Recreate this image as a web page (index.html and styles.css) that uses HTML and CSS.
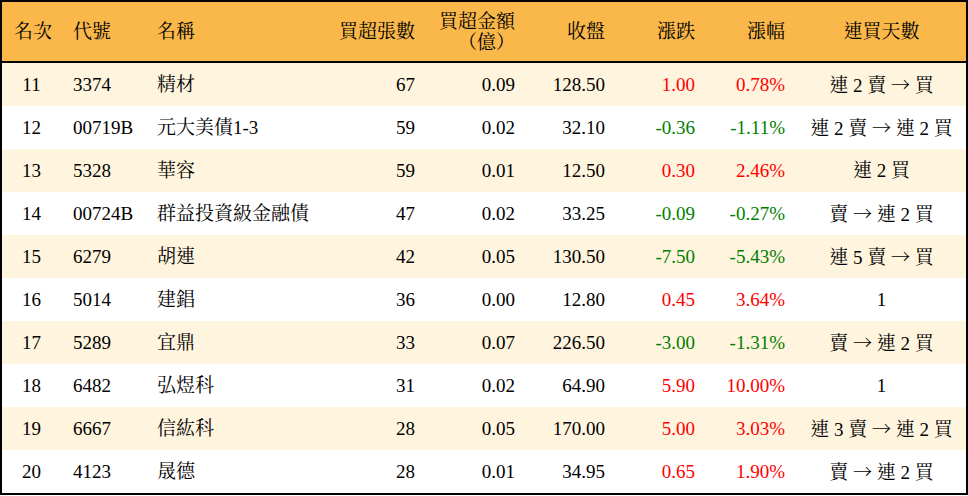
FILE: index.html
```html
<!DOCTYPE html>
<html lang="zh-Hant">
<head>
<meta charset="utf-8">
<title>買超排行</title>
<link rel="stylesheet" href="styles.css">
</head>
<body>
<table class="rank">
  <colgroup>
    <col class="c-rank"><col class="c-code"><col class="c-name"><col class="c-vol"><col class="c-amt"><col class="c-close"><col class="c-chg"><col class="c-pct"><col class="c-days">
  </colgroup>
  <thead>
    <tr>
      <th class="ctr">名次</th>
      <th class="lft">代號</th>
      <th class="lft">名稱</th>
      <th class="rgt">買超張數</th>
      <th class="rgt">買超金額<br>（億）</th>
      <th class="rgt">收盤</th>
      <th class="rgt">漲跌</th>
      <th class="rgt">漲幅</th>
      <th class="ctr">連買天數</th>
    </tr>
  </thead>
  <tbody>
    <tr class="odd"><td class="ctr">11</td><td class="lft">3374</td><td class="lft">精材</td><td class="rgt">67</td><td class="rgt">0.09</td><td class="rgt">128.50</td><td class="rgt up">1.00</td><td class="rgt up">0.78%</td><td class="ctr">連 2 賣 <span class="arr">→</span> 買</td></tr>
    <tr><td class="ctr">12</td><td class="lft">00719B</td><td class="lft">元大美債1-3</td><td class="rgt">59</td><td class="rgt">0.02</td><td class="rgt">32.10</td><td class="rgt down">-0.36</td><td class="rgt down">-1.11%</td><td class="ctr">連 2 賣 <span class="arr">→</span> 連 2 買</td></tr>
    <tr class="odd"><td class="ctr">13</td><td class="lft">5328</td><td class="lft">華容</td><td class="rgt">59</td><td class="rgt">0.01</td><td class="rgt">12.50</td><td class="rgt up">0.30</td><td class="rgt up">2.46%</td><td class="ctr">連 2 買</td></tr>
    <tr><td class="ctr">14</td><td class="lft">00724B</td><td class="lft">群益投資級金融債</td><td class="rgt">47</td><td class="rgt">0.02</td><td class="rgt">33.25</td><td class="rgt down">-0.09</td><td class="rgt down">-0.27%</td><td class="ctr">賣 <span class="arr">→</span> 連 2 買</td></tr>
    <tr class="odd"><td class="ctr">15</td><td class="lft">6279</td><td class="lft">胡連</td><td class="rgt">42</td><td class="rgt">0.05</td><td class="rgt">130.50</td><td class="rgt down">-7.50</td><td class="rgt down">-5.43%</td><td class="ctr">連 5 賣 <span class="arr">→</span> 買</td></tr>
    <tr><td class="ctr">16</td><td class="lft">5014</td><td class="lft">建錩</td><td class="rgt">36</td><td class="rgt">0.00</td><td class="rgt">12.80</td><td class="rgt up">0.45</td><td class="rgt up">3.64%</td><td class="ctr">1</td></tr>
    <tr class="odd"><td class="ctr">17</td><td class="lft">5289</td><td class="lft">宜鼎</td><td class="rgt">33</td><td class="rgt">0.07</td><td class="rgt">226.50</td><td class="rgt down">-3.00</td><td class="rgt down">-1.31%</td><td class="ctr">賣 <span class="arr">→</span> 連 2 買</td></tr>
    <tr><td class="ctr">18</td><td class="lft">6482</td><td class="lft">弘煜科</td><td class="rgt">31</td><td class="rgt">0.02</td><td class="rgt">64.90</td><td class="rgt up">5.90</td><td class="rgt up">10.00%</td><td class="ctr">1</td></tr>
    <tr class="odd"><td class="ctr">19</td><td class="lft">6667</td><td class="lft">信紘科</td><td class="rgt">28</td><td class="rgt">0.05</td><td class="rgt">170.00</td><td class="rgt up">5.00</td><td class="rgt up">3.03%</td><td class="ctr">連 3 賣 <span class="arr">→</span> 連 2 買</td></tr>
    <tr><td class="ctr">20</td><td class="lft">4123</td><td class="lft">晟德</td><td class="rgt">28</td><td class="rgt">0.01</td><td class="rgt">34.95</td><td class="rgt up">0.65</td><td class="rgt up">1.90%</td><td class="ctr">賣 <span class="arr">→</span> 連 2 買</td></tr>
  </tbody>
</table>
</body>
</html>
```
FILE: styles.css
```css
html, body {
  margin: 0;
  padding: 0;
  background: #ffffff;
}

body {
  font-family: "Liberation Serif", "Noto Serif CJK TC", "Noto Sans CJK TC", serif;
  font-size: 19px;
  color: #000000;
}

.rank {
  width: 968px;
  table-layout: fixed;
  border-collapse: separate;
  border-spacing: 0;
  border: 2px solid #000000;
}

.c-rank { width: 59px; }
.c-code { width: 84px; }
.c-name { width: 180px; }
.c-vol { width: 102px; }
.c-amt { width: 100px; }
.c-close { width: 90px; }
.c-chg { width: 90px; }
.c-pct { width: 90px; }
.c-days { width: 169px; }

.rank th {
  height: 59px;
  padding: 0 12px;
  background: #fab84b;
  font-weight: normal;
  line-height: 21px;
  border-bottom: 2px solid #000000;
  vertical-align: middle;
  white-space: nowrap;
}

.rank td {
  height: 43px;
  padding: 0 12px;
  line-height: 21px;
  vertical-align: middle;
  white-space: nowrap;
}

.rank tbody tr {
  background: #ffffff;
}

.rank tbody tr.odd {
  background: #fff4de;
}

.ctr { text-align: center; }
.lft { text-align: left; }
.rgt { text-align: right; }

.up { color: #ff0000; }
.down { color: #008000; }

.arr {
  font-family: "Noto Serif CJK TC", "Noto Sans CJK TC", serif;
}
```
